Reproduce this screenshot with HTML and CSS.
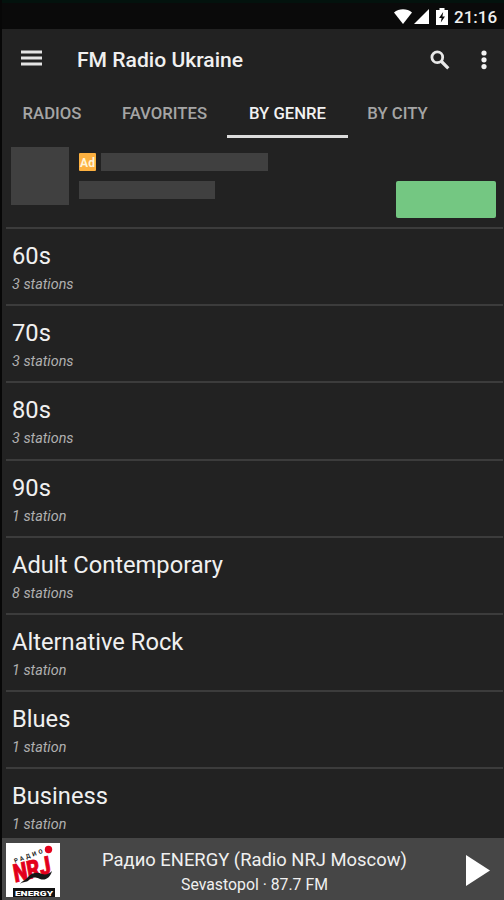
FILE: index.html
```html
<!DOCTYPE html>
<html lang="en">
<head>
  <meta charset="UTF-8">
  <title>FM Radio Ukraine</title>
  <link rel="stylesheet" href="styles.css">
</head>
<body>
  <div class="app">
    <div class="status-bar">
      <svg class="wifi" width="18" height="15" viewBox="0 0 18 15"><path d="M0 3.5C5-.9 13-.9 18 3.5L9 15z" fill="#fff"/></svg>
      <svg class="signal" width="15" height="15" viewBox="0 0 15 15"><path d="M15 0v15H0z" fill="#fff"/></svg>
      <svg class="battery" width="12" height="17" viewBox="0 0 12 17"><path d="M3.5 0h5v2H12v15H0V2h3.5z" fill="#fff"/><path d="M7.2 4L3 10h2.6L4.8 14.5 9 8.6H6.4z" fill="#0a0a0a"/></svg>
      <span class="clock">21:16</span>
    </div>

    <header class="toolbar">
      <svg class="menu" width="21" height="16" viewBox="0 0 21 16"><path d="M0 2h21M0 8h21M0 14h21" stroke="#e4e4e4" stroke-width="3"/></svg>
      <h1>FM Radio Ukraine</h1>
      <svg class="search" width="20" height="20" viewBox="0 0 20 20"><g fill="none" stroke="#e8e8e8"><circle cx="7.3" cy="7.3" r="5.4" stroke-width="2.8"/><path d="M11.5 11.5l6.8 6.8" stroke-width="3.2"/></g></svg>
      <svg class="more" width="6" height="20" viewBox="0 0 6 20"><g fill="#f2f2f2"><circle cx="3" cy="3" r="2.6"/><circle cx="3" cy="9.8" r="2.6"/><circle cx="3" cy="16.6" r="2.6"/></g></svg>
    </header>

    <nav class="tabs">
      <a class="tab tab-radios">RADIOS</a>
      <a class="tab tab-favorites">FAVORITES</a>
      <a class="tab tab-genre active">BY GENRE</a>
      <a class="tab tab-city">BY CITY</a>
    </nav>

    <div class="ad">
      <div class="ad-image"></div>
      <div class="ad-text">
        <div class="ad-line"><span class="ad-badge">Ad</span><span class="bar bar-long"></span></div>
        <div class="bar bar-short"></div>
      </div>
      <div class="ad-button"></div>
    </div>

    <ul class="genres">
      <li><h2>60s</h2><p>3 stations</p></li>
      <li><h2>70s</h2><p>3 stations</p></li>
      <li><h2>80s</h2><p>3 stations</p></li>
      <li><h2>90s</h2><p>1 station</p></li>
      <li><h2>Adult Contemporary</h2><p>8 stations</p></li>
      <li><h2>Alternative Rock</h2><p>1 station</p></li>
      <li><h2>Blues</h2><p>1 station</p></li>
      <li><h2>Business</h2><p>1 station</p></li>
    </ul>

    <footer class="player">
      <svg class="logo" width="54" height="54" viewBox="0 0 54 54">
        <rect width="54" height="54" fill="#fff"/>
        <text class="logo-radio" transform="translate(9 20) rotate(-20)" textLength="30">РАДИО</text>
        <text class="logo-nrj" transform="translate(9 39.5) rotate(-14) skewX(-4)" textLength="38" lengthAdjust="spacingAndGlyphs">NRJ</text>
        <circle cx="42.5" cy="6.5" r="3.7" fill="#e3001b"/>
        <path d="M14 41c3-4 5-3 9-8 4-4 9-4 13-2 4 1 7 0 10-3-2 7-7 10-12 8-5-2-8-2-11 1-3 3-5 1-9 4z" fill="#161616"/>
        <rect x="7" y="45" width="42" height="9" fill="#111"/>
        <text class="logo-energy" x="9" y="52.5" textLength="38" lengthAdjust="spacingAndGlyphs">ENERGY</text>
      </svg>
      <div class="now-playing">
        <div class="station">Радио ENERGY (Radio NRJ Moscow)</div>
        <div class="place">Sevastopol · 87.7 FM</div>
      </div>
      <svg class="play" width="24" height="31" viewBox="0 0 24 31"><path d="M0 0l24 15.5L0 31z" fill="#fff"/></svg>
    </footer>
  </div>
</body>
</html>
```
FILE: styles.css
```css
* {
  box-sizing: border-box;
}

body {
  margin: 0;
  background: #0a0a0a;
  font-family: Roboto, "Noto Sans", sans-serif;
  color: #f0f0f0;
}

h1, h2, p, ul {
  margin: 0;
  padding: 0;
}

svg {
  display: block;
  flex: none;
}

.app {
  display: flex;
  flex-direction: column;
  height: 900px;
  overflow: hidden;
  border-left: 2px solid #070707;
  background: #222;
}

/* status bar */
.status-bar {
  flex: none;
  display: flex;
  align-items: center;
  justify-content: flex-end;
  height: 29px;
  padding: 1px 7px 0 0;
  background: #0a0a0a;
  border-top: 3px solid #03120d;
}

.signal {
  margin-left: 2px;
}

.battery {
  margin-left: 7px;
}

.clock {
  width: 43px;
  margin-left: 6px;
  font-size: 17px;
  font-weight: 500;
  line-height: 20px;
  white-space: nowrap;
}

/* toolbar */
.toolbar {
  flex: none;
  display: flex;
  align-items: center;
  height: 61px;
  padding: 0 17px 0 19px;
}

.menu {
  margin-top: -3px;
}

.toolbar h1 {
  flex: 1;
  margin-left: 35px;
  font-size: 21.1px;
  font-weight: 500;
  line-height: 28px;
}

.search {
  margin-right: 31px;
}

/* tabs */
.tabs {
  flex: none;
  display: flex;
  height: 48px;
  margin-bottom: 1px;
}

.tab {
  display: flex;
  justify-content: center;
  padding-top: 14px;
  font-size: 16.7px;
  font-weight: 500;
  line-height: 20px;
  color: #a5a5a5;
  white-space: nowrap;
}

.tab-radios {
  width: 100px;
}

.tab-favorites {
  width: 125px;
}

.tab-genre {
  width: 121px;
}

.tab-city {
  width: 99px;
}

.tab.active {
  color: #f2f2f2;
  border-bottom: 3px solid #dcdcdc;
}

/* ad placeholder */
.ad {
  flex: none;
  display: flex;
  height: 88px;
  padding: 8px 8px 0 9px;
}

.ad-image {
  width: 58px;
  height: 58px;
  background: #404040;
}

.ad-text {
  flex: 1;
  padding: 6px 0 0 10px;
}

.ad-line {
  display: flex;
  gap: 5px;
  margin-bottom: 10px;
}

.ad-badge {
  width: 17px;
  height: 18px;
  border-radius: 1px;
  background: #fdb140;
  color: #fff4d8;
  font-size: 12px;
  font-weight: 700;
  line-height: 20px;
  text-align: center;
}

.bar {
  height: 18px;
  background: #404040;
}

.bar-long {
  width: 167px;
}

.bar-short {
  width: 136px;
}

.ad-button {
  width: 100px;
  height: 37px;
  margin-top: 34px;
  border-radius: 2px;
  background: #74c782;
}

/* genre list */
.genres {
  flex: 1;
  min-height: 0;
  overflow: hidden;
  list-style: none;
}

.genres li {
  height: 77.2px;
  margin: 0 1px 0 4px;
  padding: 13px 6px 0;
  border-top: 2px solid #3c3c3c;
}

.genres h2 {
  font-size: 23.7px;
  font-weight: 400;
  line-height: 28px;
}

.genres p {
  margin-top: 6px;
  font-size: 14.4px;
  font-style: italic;
  line-height: 18px;
  color: #b0b0b0;
}

/* player */
.player {
  flex: none;
  display: flex;
  height: 62px;
  padding: 5px 14px 0 4px;
  background: #464646;
}

.now-playing {
  flex: 1;
  padding: 5px 17px 0 0;
  text-align: center;
  white-space: nowrap;
}

.station {
  font-size: 18.4px;
  line-height: 24px;
}

.place {
  margin-top: 3px;
  font-size: 15.8px;
  line-height: 20px;
}

.play {
  margin-top: 12px;
}

.logo-radio {
  font-size: 6px;
  font-weight: 700;
  fill: #222;
}

.logo-nrj {
  font-size: 25px;
  font-weight: 900;
  fill: #e3001b;
  stroke: #e3001b;
  stroke-width: .8px;
}

.logo-energy {
  font-size: 8px;
  font-weight: 900;
  fill: #fff;
}
```
